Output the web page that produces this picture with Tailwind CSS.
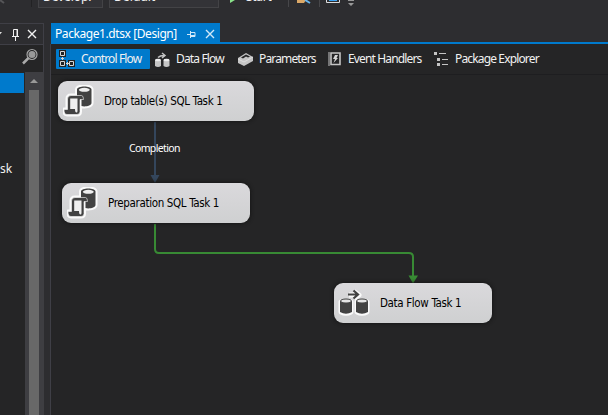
<!DOCTYPE html>
<html lang="en"><head><meta charset="utf-8"><title>Package Designer</title>
<script src="https://cdn.jsdelivr.net/npm/@tailwindcss/browser@4"></script></head>
<body class="w-[608px] h-[415px] overflow-hidden bg-[#2d2d30] text-[#f1f1f1] text-[12px] leading-[16px] font-['Noto_Sans','Open_Sans',sans-serif] flex flex-col whitespace-nowrap">
<svg class="hidden">
<symbol id="sql" viewBox="0 0 32 32">
<path d="M14 4.500c0-4 14.500-4 14.500 0v13.500c0 3-7 4-10 3v-8h-4.500zM4.500 14q0-3.500 3.500-3.500h12v4h-3v12q0 3-3 3H4q-3 0-3-5h3.500z" fill="#fafafa" stroke="#fafafa" stroke-width="4" stroke-linejoin="round"/>
<path d="M14 4.500c0-4 14.500-4 14.500 0v13.500c0 3-7 4-10 3v-8h-4.500z" fill="#424242"/><ellipse cx="21.300" cy="4.800" rx="5.500" ry="2" fill="#efefef"/>
<path d="M4.500 14q0-3.500 3.500-3.500h10.500q2 0 2 4H17v12q0 3-3 3H4q-3 0-3-5h3.500z" fill="#424242" stroke="#fafafa" stroke-width=".6"/><path d="M7.200 13.500h7.300v12.500q0 1.500-1 1.500-1.500 0-1.500-3.500H7.200z" fill="#f0f0f0"/>
</symbol>
</svg>
<header class="h-[23px] flex items-start relative shrink-0">
<svg class="w-[31px] h-2" viewBox="0 0 31 8"><path d="M0 0l4 3" stroke="#555558" stroke-width="2"/></svg>
<div class="w-px h-[7px] bg-[#222224]"></div>
<div class="ml-[6px] w-[65px] h-2 border border-t-0 border-[#434346] bg-[#333337] overflow-hidden"><div class="-mt-[11px] ml-[4px] tracking-[-0.1px]">Develop.</div></div>
<div class="ml-[6px] w-[110px] h-2 border border-t-0 border-[#434346] bg-[#333337] overflow-hidden"><div class="-mt-[11px] ml-[4px]">Default</div></div>
<svg class="ml-[11px] w-[8px] h-[4px]" viewBox="0 0 8 4"><path d="M0 0h5L0 3z" fill="#8ae28a"/></svg>
<div class="ml-[8px] w-[26px] h-[6px] overflow-hidden"><div class="-mt-[11px] tracking-[-0.3px]">Start</div></div>
<svg class="ml-[16px] w-[75px] h-[7px]" viewBox="0 0 75 7"><path d="M.5 0v7M31.5 0v7" stroke="#47474a"/><path d="M9 0h9l-2 3H9z" fill="#dba867"/><path d="M17 0l5 3" stroke="#69b6ef" stroke-width="2"/><path d="M38.5 0v2.500h13V0" fill="none" stroke="#ddd"/><path d="M41 0h8v1h-8z" fill="#3ba4f5"/><path d="M60 0h6v1h-6zM60 3h6l-3 3z" fill="#999"/></svg>
</header>
<main class="flex flex-1 min-h-0">
<aside class="w-[44px] flex flex-col border-t border-[#3f3f46] shrink-0">
<div class="h-[21px] border-r border-b border-[#3f3f46] flex items-center"><svg class="w-[43px] h-[20px]" viewBox="0 0 43 20"><path d="M-3 8h5L-.5 11z" fill="#ddd"/><path d="M13.500 12V5.500h4V12M12 12.500h7M15.500 13v4" fill="none" stroke="#f1f1f1"/><path d="M17 5v7" stroke="#f1f1f1"/><path d="M28 6l8 8M36 6l-8 8" stroke="#f1f1f1" stroke-width="1.400"/></svg></div>
<div class="h-[27px] border-r border-[#3f3f46] bg-[#252526]"><svg class="w-[43px] h-[27px]" viewBox="0 0 43 27"><circle cx="32" cy="9.500" r="3.500" fill="#999"/><circle cx="32" cy="9.500" r="5" fill="none" stroke="#a5a5a5" stroke-width="1.200"/><path d="M28.500 13l-5.500 5.500" stroke="#aaa" stroke-width="2.500"/></svg></div>
<div class="flex flex-1 min-h-0"><div class="w-[25px] bg-[#252526] overflow-hidden"><div class="w-[24px] h-[20px] mt-px bg-[#007acc]"></div><div class="mt-[68px] text-[#f1f1f1]">sk</div></div>
<div class="w-[19px] bg-[#3e3e42] flex flex-col"><svg class="w-[19px] h-[18px] shrink-0" viewBox="0 0 19 18"><path d="M5 11h8l-4-4z" fill="#999"/></svg><div class="w-[10px] ml-[4px] flex-1 bg-[#686868]"></div></div></div>
</aside>
<section class="ml-[6px] flex-1 min-w-0 flex flex-col">
<div class="h-[19px] ml-px w-[169px] bg-[#007acc] flex items-center text-white"><span class="ml-[4px] mt-[2px] w-[122px] tracking-[-0.42px]">Package1.dtsx [Design]</span>
<svg class="ml-[9px] w-[31px] h-[19px]" viewBox="0 0 31 19"><path d="M1 11.500h3M4.500 8v7M5 9.500h4v4H5M5 12.500h4" fill="none" stroke="#d0e8f8"/><path d="M20 7l8 8M28 7l-8 8" stroke="#d0e8f8" stroke-width="1.400"/></svg></div>
<div class="h-[2px] ml-px bg-[#007acc]"></div>
<div class="flex-1 bg-[#252526] border-l border-[#3f3f46] flex flex-col min-h-0">
<nav class="h-[30px] relative flex items-center text-[12px] tracking-[-0.85px]">
<div class="ml-[5px] w-[94px] h-[20px] mb-[1px] rounded-[1px] bg-[#007acc] flex items-center"><svg class="ml-[3px] w-[17px] h-[17px]" viewBox="0 0 17 17"><path d="M1.500 1.500h4v4h-4zM1.500 11.500h4v4h-4zM10.500 11.500h4v4h-4z" fill="#222" stroke="#222" stroke-width="3"/><path d="M1.500 1.500h4v4h-4zM1.500 11.500h4v4h-4zM10.500 11.500h4v4h-4z" fill="#222" stroke="#d5d5d5"/><path d="M3.500 7v3M2 8.500h3M7 13.500h3M8.500 12v3" stroke="#d5d5d5"/></svg><span class="ml-[5px]">Control Flow</span></div>
<svg class="ml-[5px] w-[15px] h-[15px] shrink-0" viewBox="0 0 15 15"><path d="M0 8h6v6q-3 2-6 0zM8.500 8h6v6q-3 2-6 0z" fill="#c5c5c5"/><ellipse cx="3" cy="8" rx="3" ry="1.300" fill="#eee"/><ellipse cx="11.500" cy="8" rx="3" ry="1.300" fill="#eee"/><path d="M3 5.500q2-2 6-2M7 1l3 2.500L7 6" fill="none" stroke="#c5c5c5" stroke-width="1.500"/></svg>
<span class="ml-[6px] w-[49px]">Data Flow</span>
<svg class="ml-[13px] w-[15px] h-[14px]" viewBox="0 0 15 14"><path d="M0 6l8-5 7 4v4l-9 5-6-3z" fill="#c5c5c5"/><path d="M3 5.500l5-3 4 2-2 1-2-1-3 2z" fill="#252526"/><path d="M0 7l6 3 9-5" stroke="#ddd" fill="none"/></svg>
<span class="ml-[6px] w-[57px]">Parameters</span>
<svg class="ml-[12px] w-[13px] h-[14px]" viewBox="0 0 13 14"><path d="M3 1h9v11.500H3z" fill="#252526" stroke="#c5c5c5" stroke-width="1.600"/><path d="M0 1h2M0 3h2M0 5h2M0 7h2M0 9h2M0 11h2M0 13h2" stroke="#c5c5c5"/><path d="M7 3h3L8.500 6H10l-4.500 5L7 7H5z" fill="#d5d5d5"/></svg>
<span class="ml-[7px] w-[75px]">Event Handlers</span>
<svg class="ml-[11px] w-[15px] h-[14px]" viewBox="0 0 15 14"><path d="M0 0h3v3H0zM3 6h3v3H3zM3 11h3v3H3zM5 1h7v1H5zM8 7h6v1H8zM8 12h6v1H8z" fill="#c5c5c5"/></svg>
<span class="ml-[6px]">Package Explorer</span>
</nav>
<div class="relative flex-1 border-t border-[#1e1e20] text-black font-['DejaVu_Sans_Condensed','DejaVu_Sans',sans-serif] text-[11.500px] tracking-[-0.35px]">
<svg class="absolute left-0 top-0 w-[557px] h-[340px]" viewBox="51 75 557 340"><path d="M155 122v55" stroke="#34465c" stroke-width="2"/><path d="M150.500 175h9l-4.500 8z" fill="#34465c"/><path d="M155 224v25q0 4 4 4h250q4 0 4 4v20" fill="none" stroke="#388a34" stroke-width="2"/><path d="M408.500 275.500h9.500l-5 8z" fill="#388a34"/></svg>
<div class="absolute left-[78px] top-[65px] text-white text-[10.500px] tracking-[-0.65px] font-['Noto_Sans',sans-serif]">Completion</div>
<div class="absolute left-[7px] top-[6px] w-[196px] h-[40px] rounded-[9px] bg-linear-to-b from-[#dad9dc] to-[#cfd0d1] shadow-[0_0_4px_#111] flex items-center"><svg class="ml-[5px] w-[32px] h-[32px] overflow-visible"><use href="#sql"/></svg><span class="ml-[9px]">Drop table(s) SQL Task 1</span></div>
<div class="absolute left-[11px] top-[108px] w-[188px] h-[40px] rounded-[9px] bg-linear-to-b from-[#dad9dc] to-[#cfd0d1] shadow-[0_0_4px_#111] flex items-center"><svg class="ml-[5px] w-[32px] h-[32px] overflow-visible"><use href="#sql"/></svg><span class="ml-[9px]">Preparation SQL Task 1</span></div>
<div class="absolute left-[283px] top-[208px] w-[158px] h-[40px] rounded-[9px] bg-linear-to-b from-[#dad9dc] to-[#cfd0d1] shadow-[0_0_4px_#111] flex items-center"><svg class="ml-[4px] w-[33px] h-[32px]" viewBox="0 0 33 32"><path d="M3 15h10v10q-5 2.500-10 0zM19 15h10v10q-5 2.500-10 0zM11 8h9M16 4.500l5 3.500-5 3.500" fill="#fafafa" stroke="#fafafa" stroke-width="5" stroke-linejoin="round"/><path d="M2 14h12v11q-6 3.500-12 0zM18 14h12v11q-6 3.500-12 0z" fill="#424242"/><ellipse cx="8" cy="14" rx="5.500" ry="2" fill="#e5e5e5" stroke="#424242"/><ellipse cx="24" cy="14" rx="5.500" ry="2" fill="#e5e5e5" stroke="#424242"/><path d="M10 7.500h10M15.500 3.500l4.500 4-4.500 4" fill="none" stroke="#424242" stroke-width="2.200"/></svg><span class="ml-[9px]">Data Flow Task 1</span></div>
</div>
</div>
</section>
</main>
</body></html>
